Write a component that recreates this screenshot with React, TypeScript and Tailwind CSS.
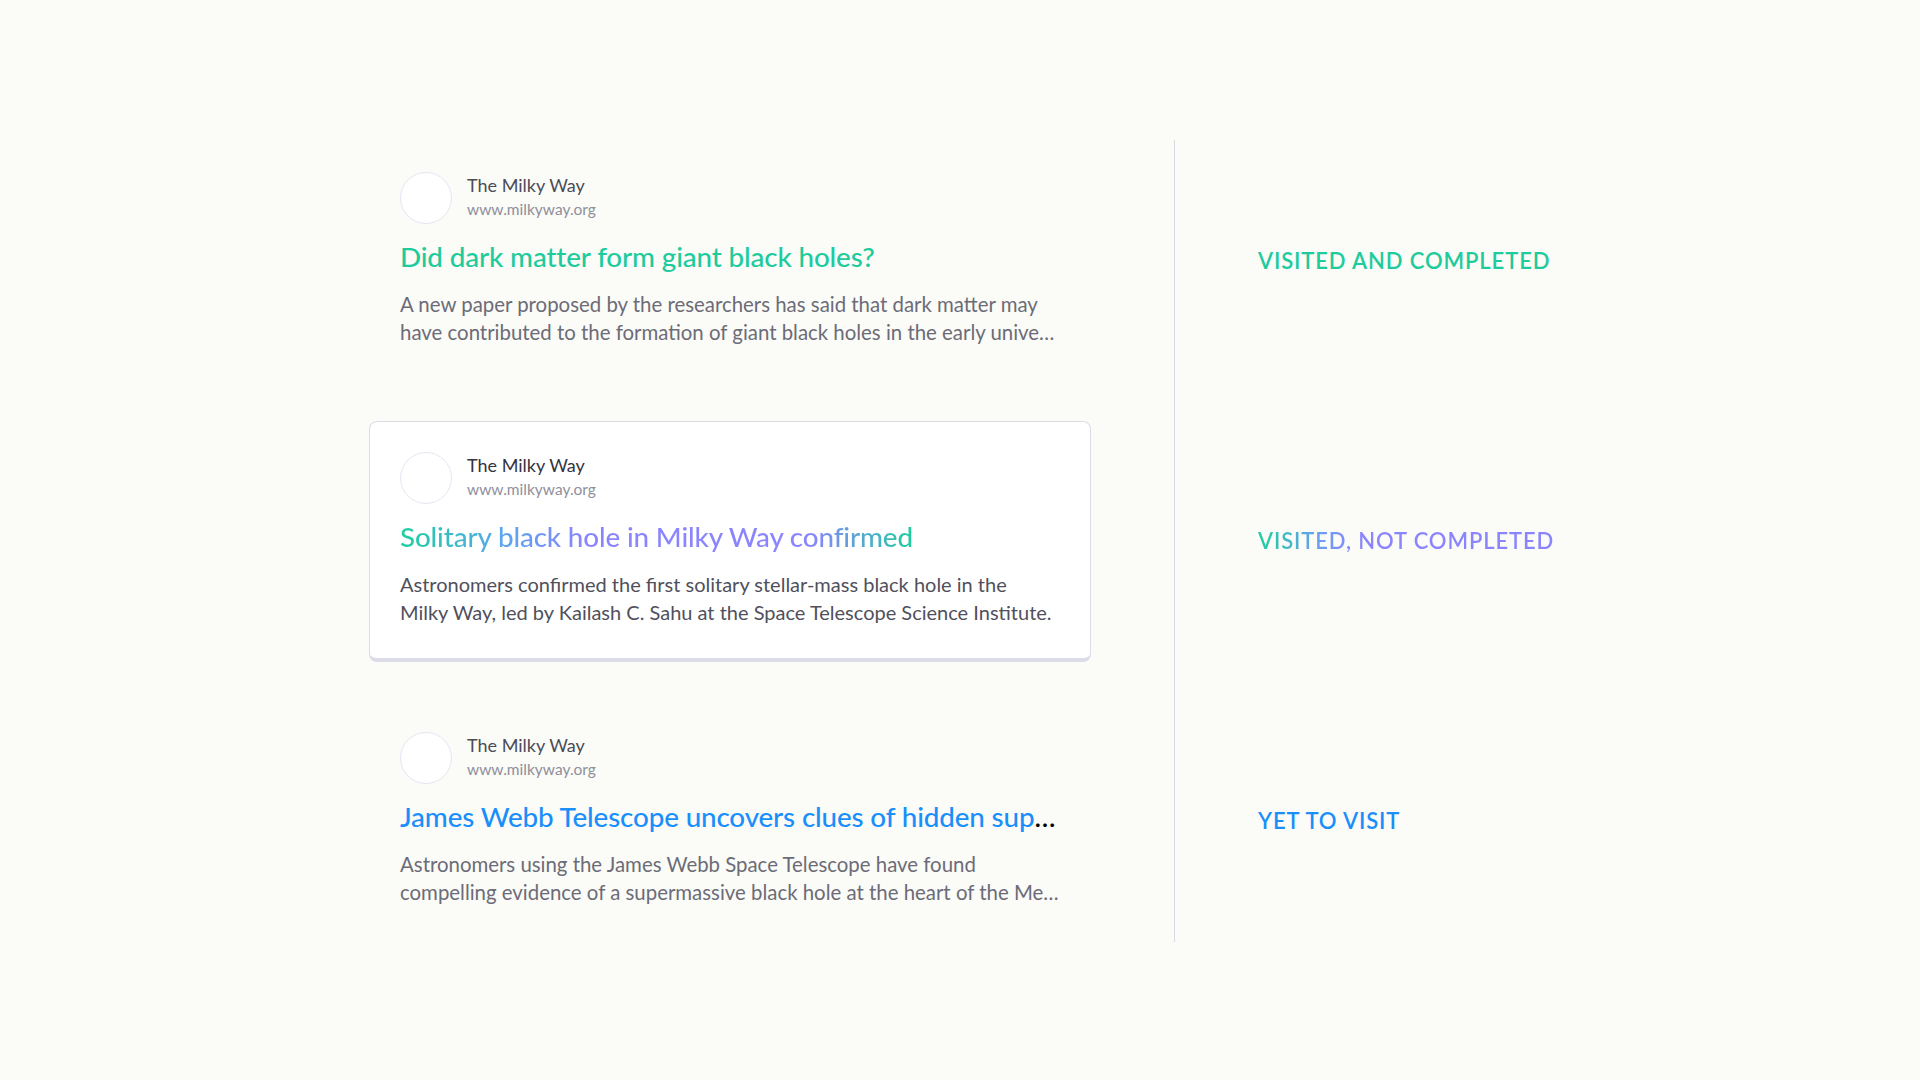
import React from "react";

type Item = {
  title: string;
  lines: [string, string];
  kind: "done" | "visited" | "new";
};

const items: Item[] = [
  {
    title: "Did dark matter form giant black holes?",
    lines: [
      "A new paper proposed by the researchers has said that dark matter may",
      "have contributed to the formation of giant black holes in the early universe, long before the first stars formed.",
    ],
    kind: "done",
  },
  {
    title: "Solitary black hole in Milky Way confirmed",
    lines: [
      "Astronomers confirmed the first solitary stellar-mass black hole in the",
      "Milky Way, led by Kailash C. Sahu at the Space Telescope Science Institute.",
    ],
    kind: "visited",
  },
  {
    title: "James Webb Telescope uncovers clues of hidden supermassive black holes",
    lines: [
      "Astronomers using the James Webb Space Telescope have found",
      "compelling evidence of a supermassive black hole at the heart of the Messier 87 galaxy.",
    ],
    kind: "new",
  },
];

function Card({ item }: { item: Item }) {
  const isCard = item.kind === "visited";
  return (
    <div
      className={
        isCard
          ? "w-[722px] h-[241px] rounded-[8px] border border-b-4 border-[#dcdbe8] bg-white px-[30px] pt-[30px]"
          : "w-[722px] h-[241px] rounded-[8px] border border-b-4 border-transparent px-[30px] pt-[30px]"
      }
    >
      <div className="flex items-start gap-[15px]">
        <div className="w-[52px] h-[52px] rounded-full border-[1.5px] border-[#e7e5f3] bg-white shrink-0" />
        <div className="flex flex-col pt-[1px]">
          <span
            className={
              isCard
                ? "text-[18px] leading-[24px] text-[#34343e]"
                : "text-[18px] leading-[24px] text-[#4c4c57]"
            }
          >
            The Milky Way
          </span>
          <span className="text-[15.5px] leading-[24px] text-[#8f8f9b]">www.milkyway.org</span>
        </div>
      </div>
      <div className="mt-[15px] h-[36px] truncate text-[27.8px] leading-[36px] font-medium tracking-[-0.005em]">
        {item.kind === "visited" ? (
          <span className="bg-[linear-gradient(90deg,#1ecf9f_0%,#5aa6ee_20%,#8a84ff_36%,#8a84ff_80%,#1fcc9f_100%)] bg-clip-text text-transparent">
            {item.title}
          </span>
        ) : (
          <span className={item.kind === "done" ? "text-[#1ecb9c]" : "text-[#1a8ffa]"}>
            {item.title}
          </span>
        )}
      </div>
      {isCard ? (
        <div className="mt-[15px] text-[20px] leading-[28px] text-[#50505c]">
          <p className="whitespace-nowrap">{item.lines[0]}</p>
          <p className="whitespace-nowrap">{item.lines[1]}</p>
        </div>
      ) : (
        <div className="mt-[15px] text-[20.4px] leading-[28px] text-[#6c6c78]">
          <p className="truncate">{item.lines[0]}</p>
          <p className="truncate">{item.lines[1]}</p>
        </div>
      )}
    </div>
  );
}

function Label({ kind }: { kind: Item["kind"] }) {
  return (
    <div className="h-[241px] pt-[106px] pl-[83px]">
      {kind === "done" && (
        <span className="text-[22px] leading-[28px] font-semibold tracking-[0.04em] text-[#1ecb9c]">
          VISITED AND COMPLETED
        </span>
      )}
      {kind === "visited" && (
        <span className="text-[22px] leading-[28px] font-semibold tracking-[0.04em] bg-[linear-gradient(90deg,#1ecf9f_0%,#6f9cf5_22%,#8a84ff_34%,#8a84ff_100%)] bg-clip-text text-transparent">
          VISITED, NOT COMPLETED
        </span>
      )}
      {kind === "new" && (
        <span className="text-[22px] leading-[28px] font-semibold tracking-[0.04em] text-[#1a8ffa]">
          YET TO VISIT
        </span>
      )}
    </div>
  );
}

export default function App() {
  return (
    <div
      className="w-[1920px] h-[1080px] bg-[#fbfbf7] pt-[140px] pl-[369px] flex"
      style={{ fontFamily: "Lato, 'Open Sans', sans-serif" }}
    >
      <div className="flex flex-col gap-[39px] pt-[1px]">
        {items.map((it) => (
          <Card key={it.title} item={it} />
        ))}
      </div>
      <div className="ml-[83px] w-px h-[802px] bg-[#d9d9e3]" />
      <div className="flex flex-col gap-[39px] pt-[1px]">
        {items.map((it) => (
          <Label key={it.kind} kind={it.kind} />
        ))}
      </div>
    </div>
  );
}
